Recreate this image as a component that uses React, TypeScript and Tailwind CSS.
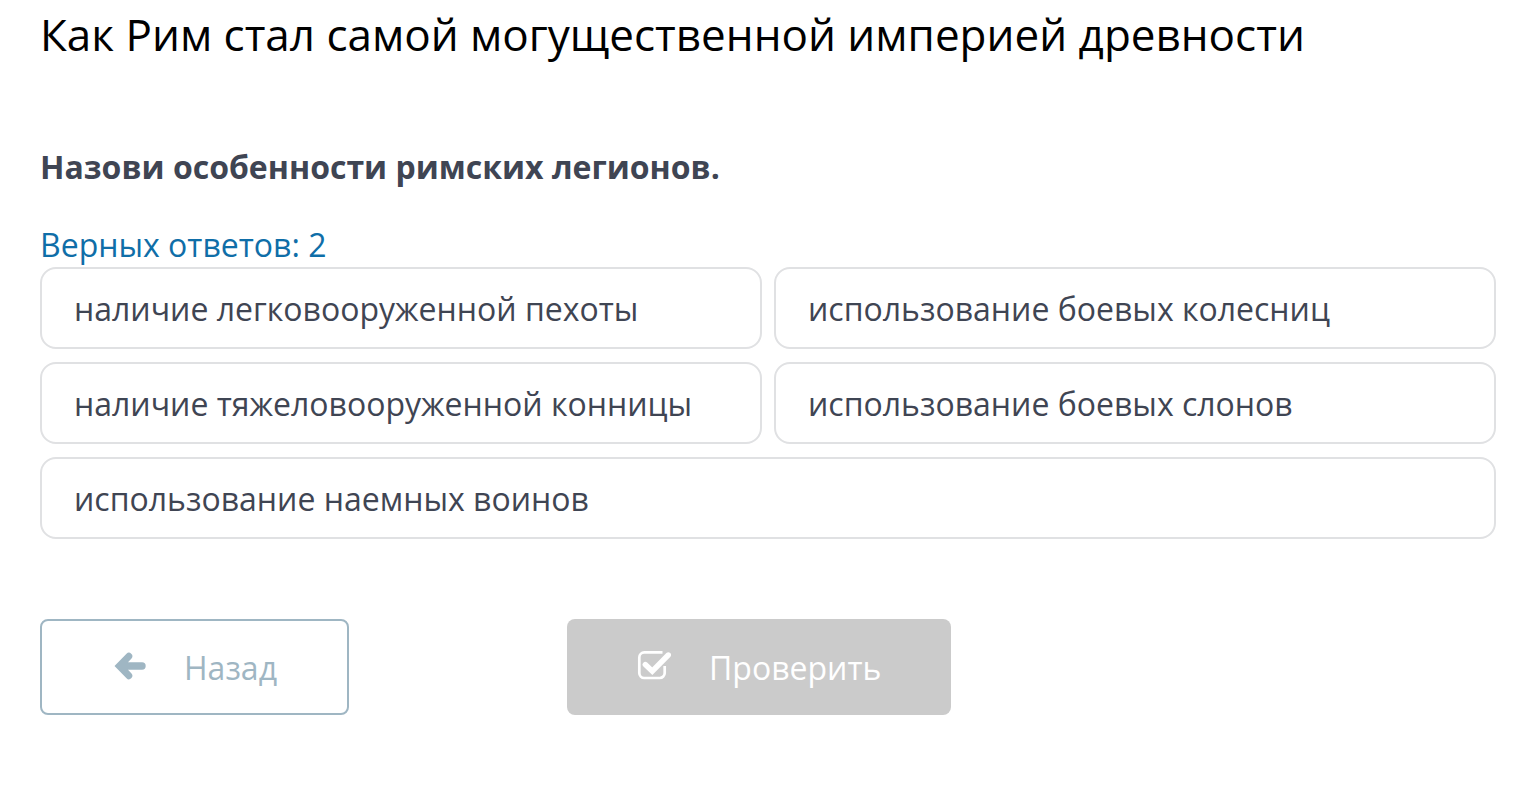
import { useState } from "react";

const answers = [
  "наличие легковооруженной пехоты",
  "использование боевых колесниц",
  "наличие тяжеловооруженной конницы",
  "использование боевых слонов",
  "использование наемных воинов",
];

export default function App() {
  const [selected, setSelected] = useState<string[]>([]);

  const toggle = (answer: string) => {
    setSelected((prev) =>
      prev.includes(answer) ? prev.filter((a) => a !== answer) : [...prev, answer]
    );
  };

  return (
    <main className="min-h-screen bg-white px-10 pt-1 pb-20 font-['Open_Sans','Noto_Sans',sans-serif] text-[#3f4553]">
      <h1 className="text-[44px] leading-[60px] text-black">
        Как Рим стал самой могущественной империей древности
      </h1>

      <h2 className="mt-[79px] text-[32px] leading-[48px] font-bold">
        Назови особенности римских легионов.
      </h2>

      <p className="mt-8 text-[32px] leading-[44px] text-[#0f6ea8]">Верных ответов: 2</p>

      {/* Answers */}
      <div className="grid grid-cols-2 gap-x-3 gap-y-[13px]">
        {answers.map((answer) => (
          <button
            key={answer}
            type="button"
            aria-pressed={selected.includes(answer)}
            onClick={() => toggle(answer)}
            className="h-[82px] rounded-2xl border-2 border-[#e0e1e3] px-8 pt-0.5 text-left text-[32px] leading-[48px] last:col-span-2 aria-pressed:border-[#0f6ea8]"
          >
            {answer}
          </button>
        ))}
      </div>

      {/* Actions */}
      <div className="mt-20 flex gap-[218px]">
        <button
          type="button"
          className="flex h-24 w-[309px] items-center rounded-lg border-2 border-[#9fb6c3] pl-[72px] text-[32px] text-[#9fb6c3]"
        >
          <svg className="mr-[38px] size-8" viewBox="0 0 32 32" fill="currentColor" aria-hidden="true">
            <path d="M.5 15 12.5 2.8a3.4 3.4 0 0 1 5 4.6L14 11.3h14a3.7 3.7 0 0 1 0 7.4H14l3.5 3.9a3.4 3.4 0 0 1-5 4.6Z" />
          </svg>
          <span className="pt-0.5">Назад</span>
        </button>
        <button
          type="button"
          disabled={selected.length === 0}
          className="flex h-24 w-96 items-center rounded-lg bg-[#0f6ea8] pl-[70px] text-[32px] text-white disabled:bg-[#cbcbcb]"
        >
          <svg
            className="mr-[38px] h-8 w-[34px]"
            viewBox="0 0 34 32"
            fill="none"
            stroke="currentColor"
            aria-hidden="true"
          >
            <path d="M27.7 15v7a5 5 0 0 1-5 5H7.3a5 5 0 0 1-5-5V6.4a5 5 0 0 1 5-5h18.2" strokeWidth="2.7" />
            <path d="m8.3 13.5 7 6.7L31.3 4" strokeWidth="5.4" strokeLinecap="round" />
          </svg>
          <span className="pt-0.5">Проверить</span>
        </button>
      </div>
    </main>
  );
}
